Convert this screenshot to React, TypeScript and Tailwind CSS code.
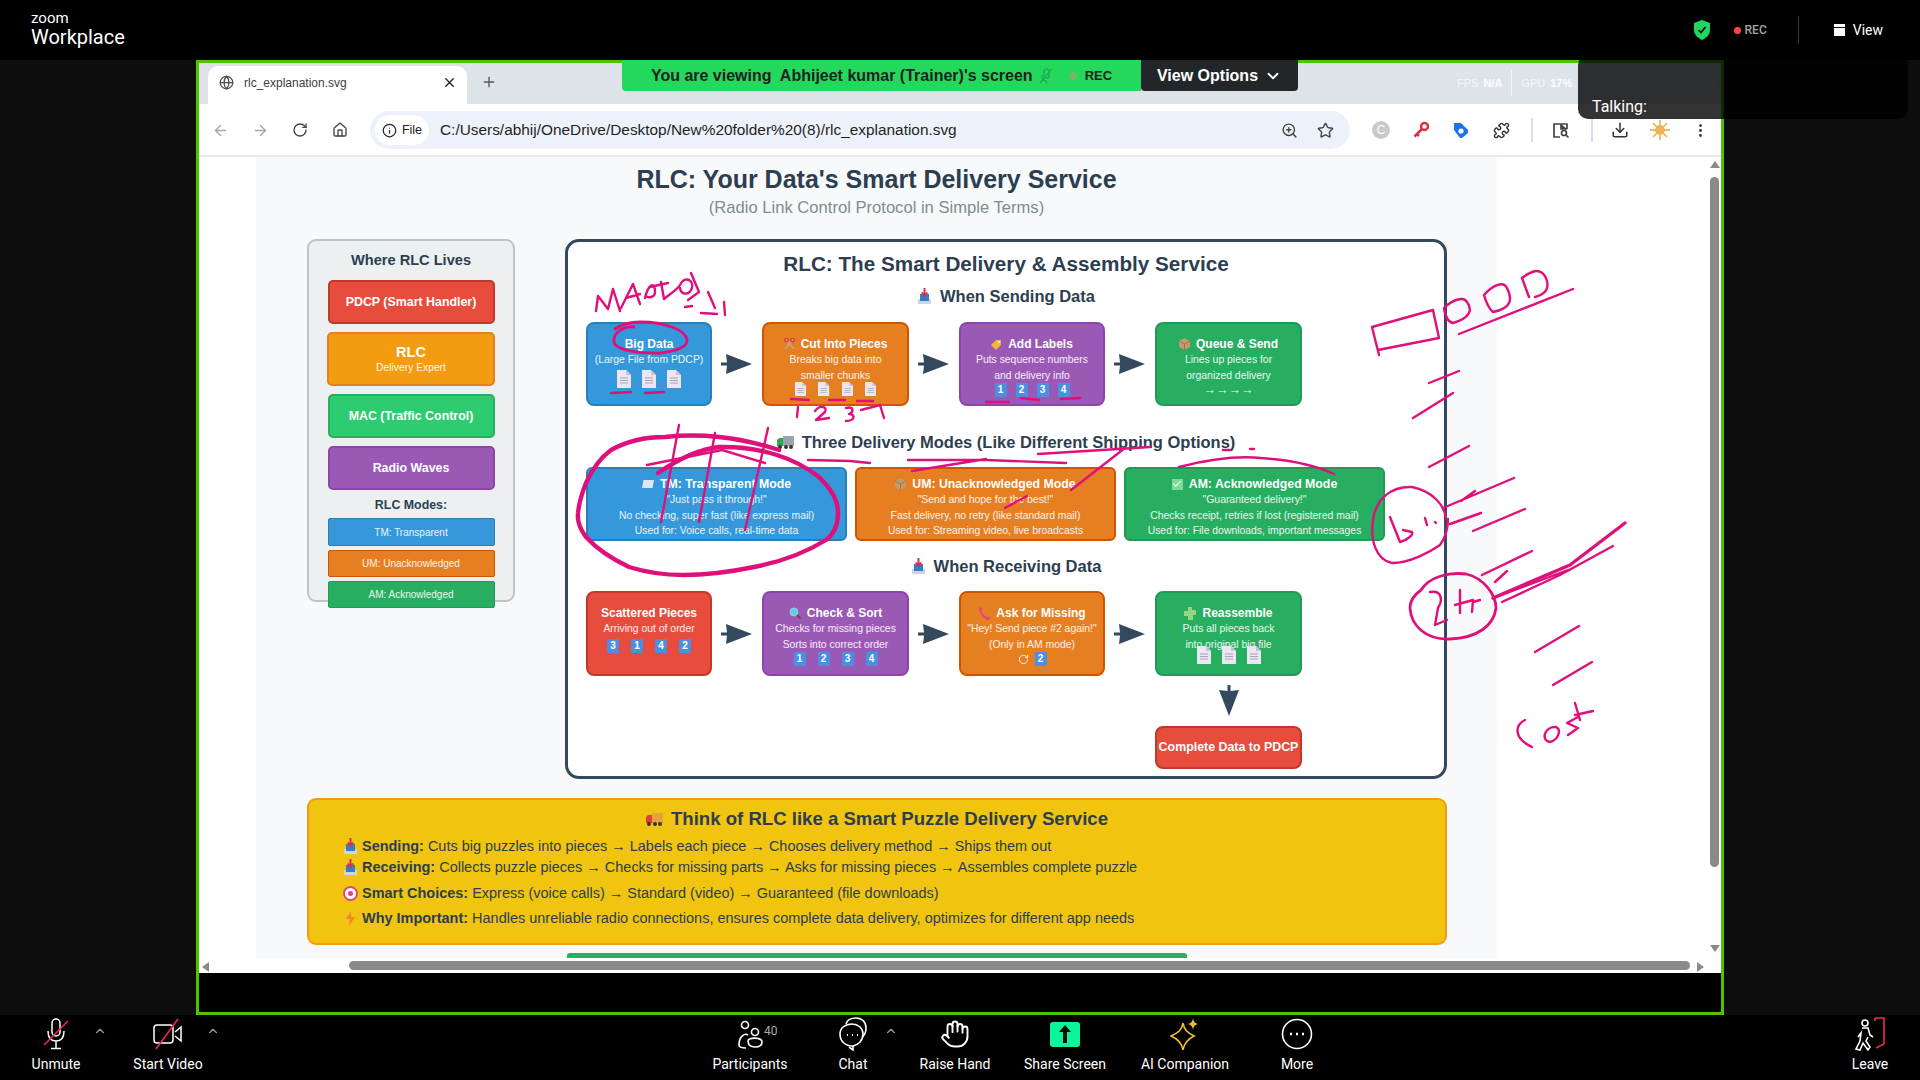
import { ReactNode } from 'react';
import { ArrowLeft, ArrowRight, RotateCw, Home, Info, ZoomIn, Star, Puzzle, Download, EllipsisVertical, Hand, ChevronUp, ChevronDown, X, Plus, Copy, Globe, Check } from 'lucide-react';

const sans = "font-['Liberation_Sans',sans-serif]";

function Doc({ s = 1 }: { s?: number }) {
  return (
    <svg width={14 * s} height={18 * s} viewBox="0 0 14 18">
      <path d="M0 0H9L14 5V18H0Z" fill="#ece6f2" />
      <path d="M9 0L14 5H9Z" fill="#c9c2d6" />
      <path d="M3 8H11M3 10.5H11M3 13H11" stroke="#a9a4b8" strokeWidth="1" />
    </svg>
  );
}

function Tile({ n }: { n: number }) {
  return (
    <span className="inline-flex h-[14px] w-[12px] items-center justify-center rounded-[1px] bg-[#4a90e2] text-[10px] font-bold leading-none text-white">
      {n}
    </span>
  );
}

function FlowArrow({ down }: { down?: boolean }) {
  return (
    <svg width="32" height="20" viewBox="0 0 32 20" className={down ? 'rotate-90' : ''}>
      <path d="M0 8.5H6L5 0L31 10L5 20L6 11.5H0Z" fill="#34495e" />
    </svg>
  );
}

function Tray() {
  return (
    <svg width="15" height="17" viewBox="0 0 15 17" className="shrink-0">
      <path d="M1 11H14V16H1Z" fill="#cfd3e6" />
      <path d="M3 6H12V13H3Z" fill="#2e7fd0" />
      <path d="M7.5 0V7M4.8 4.5L7.5 8L10.2 4.5" stroke="#d8304f" strokeWidth="2" fill="none" />
    </svg>
  );
}

function Truck({ c = '#9aa3ad', cab = '#2fa84f' }: { c?: string; cab?: string }) {
  return (
    <svg width="17" height="15" viewBox="0 0 17 15" className="shrink-0">
      <path d="M6 1H17V11H6Z" fill={c} />
      <path d="M0 5L2 3H6V11H0Z" fill={cab} />
      <circle cx="3" cy="12" r="2" fill="#333" />
      <circle cx="9" cy="12" r="2" fill="#333" />
      <circle cx="14" cy="12" r="2" fill="#333" />
    </svg>
  );
}

function Scissors() {
  return (
    <svg width="11" height="12" viewBox="0 0 11 12" className="shrink-0">
      <path d="M1 11L9 1M10 11L2 1" stroke="#b9b4b0" strokeWidth="1.2" />
      <circle cx="2.5" cy="2" r="1.8" fill="none" stroke="#d63a3a" strokeWidth="1.2" />
      <circle cx="8.5" cy="2" r="1.8" fill="none" stroke="#d63a3a" strokeWidth="1.2" />
    </svg>
  );
}

function TagIcon() {
  return (
    <svg width="11" height="11" viewBox="0 0 11 11" className="shrink-0">
      <path d="M5 1H10V6L5 11L0 6Z" fill="#f5b43c" />
      <circle cx="8" cy="3" r="1" fill="#fff" />
    </svg>
  );
}

function BoxIcon() {
  return (
    <svg width="11" height="12" viewBox="0 0 11 12" className="shrink-0">
      <path d="M5.5 0L11 3V9L5.5 12L0 9V3Z" fill="#c49a6c" />
      <path d="M0 3L5.5 6L11 3M5.5 6V12" stroke="#8e6a42" strokeWidth=".7" fill="none" />
    </svg>
  );
}

function Envelope() {
  return (
    <svg width="12" height="8" viewBox="0 0 12 8" className="shrink-0">
      <path d="M1.5 0H12L10.5 8H0Z" fill="#dfe6f5" />
    </svg>
  );
}

function CheckBox() {
  return (
    <span className="inline-flex h-[11px] w-[11px] shrink-0 items-center justify-center bg-[#7ed99b]">
      <Check size={10} strokeWidth={2.5} className="text-white" />
    </span>
  );
}

function Lens() {
  return (
    <svg width="12" height="12" viewBox="0 0 12 12" className="shrink-0">
      <circle cx="5" cy="5" r="4" fill="#5ad0f0" stroke="#9fc6d8" />
      <path d="M8 8L11.5 11.5" stroke="#6b4a32" strokeWidth="1.8" />
    </svg>
  );
}

function PhoneIcon() {
  return (
    <svg width="12" height="13" viewBox="0 0 12 13" className="shrink-0">
      <path d="M1 0L4 1L3.5 4.5C4.5 7 6.5 9 9 10L12 9.5L11 13C6 13 1 6 1 0Z" fill="#e0457e" />
    </svg>
  );
}

function PuzzleIcon() {
  return (
    <svg width="12" height="13" viewBox="0 0 12 13" className="shrink-0">
      <path d="M4 0H8V3H12V8H9V13H4V9H0V4H4Z" fill="#93d67e" />
    </svg>
  );
}

function Target() {
  return (
    <svg width="15" height="15" viewBox="0 0 15 15" className="shrink-0">
      <circle cx="7.5" cy="7.5" r="6.5" fill="#fff" stroke="#e0457e" strokeWidth="2" />
      <circle cx="7.5" cy="7.5" r="2.5" fill="#e0457e" />
    </svg>
  );
}

function Bolt() {
  return (
    <svg width="9" height="15" viewBox="0 0 9 15" className="mx-[3px] shrink-0">
      <path d="M5 0L0 8H4L3 15L9 6H5Z" fill="#f2872e" />
    </svg>
  );
}

function Card({ className, children }: { className: string; children: ReactNode }) {
  return (
    <div className={`flex h-full flex-col items-center rounded-[8px] border-2 pt-[12px] text-center text-[10.4px] leading-[15.5px] text-white/90 ${className}`}>
      {children}
    </div>
  );
}

function CardTitle({ icon, children }: { icon?: ReactNode; children: ReactNode }) {
  return (
    <div className="flex h-[16px] items-center justify-center gap-[6px] text-[12px] font-bold leading-[16px] text-white">
      {icon}
      <span>{children}</span>
    </div>
  );
}

function ModeCard({ className, icon, title, lines }: { className: string; icon: ReactNode; title: string; lines: string[] }) {
  return (
    <div className={`flex h-[74px] w-[261px] flex-col items-center rounded-[6px] border-2 pt-[7px] text-center text-[10.4px] leading-[15.5px] text-white/90 ${className}`}>
      <div className="flex h-[16px] items-center gap-[6px] text-[12.3px] font-bold leading-[16px] text-white">
        {icon}
        <span>{title}</span>
      </div>
      {lines.map((l) => (
        <div key={l} className="whitespace-nowrap">{l}</div>
      ))}
    </div>
  );
}

function Heading({ icon, children }: { icon: ReactNode; children: ReactNode }) {
  return (
    <div className="flex h-[20px] items-center justify-center gap-[8px] text-[16.5px] font-bold leading-[20px] text-[#2c3e50]">
      {icon}
      <span>{children}</span>
    </div>
  );
}

function MainPanel() {
  return (
    <div className="ml-[50px] h-[540px] w-[882px] rounded-[14px] border-[3px] border-[#34495e] bg-white pl-[18px] pt-[9px]">
      <div className="-ml-[18px] text-center text-[20.7px] font-bold leading-[26px] text-[#2c3e50]">RLC: The Smart Delivery &amp; Assembly Service</div>
      <div className="-ml-[18px] mt-[9px]"><Heading icon={<Tray />}>When Sending Data</Heading></div>

      <div className="mt-[16px] grid h-[84px] grid-cols-[126px_50px_147px_50px_146px_50px_147px]">
        <Card className="border-[#2980b9] bg-[#3498db]">
          <CardTitle>Big Data</CardTitle>
          <div>(Large File from PDCP)</div>
          <div className="flex gap-[11px] pt-[2px]"><Doc /><Doc /><Doc /></div>
        </Card>
        <div className="flex items-center justify-center"><FlowArrow /></div>
        <Card className="border-[#d35400] bg-[#e67e22]">
          <CardTitle icon={<Scissors />}>Cut Into Pieces</CardTitle>
          <div>Breaks big data into</div>
          <div>smaller chunks</div>
          <div className="-mt-[1px] flex gap-[12px]"><Doc s={0.8} /><Doc s={0.8} /><Doc s={0.8} /><Doc s={0.8} /></div>
        </Card>
        <div className="flex items-center justify-center"><FlowArrow /></div>
        <Card className="border-[#8e44ad] bg-[#9b59b6]">
          <CardTitle icon={<TagIcon />}>Add Labels</CardTitle>
          <div>Puts sequence numbers</div>
          <div>and delivery info</div>
          <div className="flex gap-[9px]"><Tile n={1} /><Tile n={2} /><Tile n={3} /><Tile n={4} /></div>
        </Card>
        <div className="flex items-center justify-center"><FlowArrow /></div>
        <Card className="border-[#229954] bg-[#27ae60]">
          <CardTitle icon={<BoxIcon />}>Queue &amp; Send</CardTitle>
          <div>Lines up pieces for</div>
          <div>organized delivery</div>
          <div className="text-[12.5px] leading-[15px]">→→→→</div>
        </Card>
      </div>

      <div className="-ml-[18px] mt-[26px]"><Heading icon={<Truck />}>Three Delivery Modes (Like Different Shipping Options)</Heading></div>

      <div className="mt-[15px] flex gap-[8px]">
        <ModeCard className="border-[#2980b9] bg-[#3498db]" icon={<Envelope />} title="TM: Transparent Mode" lines={['"Just pass it through!"', 'No checking, super fast (like express mail)', 'Used for: Voice calls, real-time data']} />
        <ModeCard className="border-[#d35400] bg-[#e67e22]" icon={<BoxIcon />} title="UM: Unacknowledged Mode" lines={['"Send and hope for the best!"', 'Fast delivery, no retry (like standard mail)', 'Used for: Streaming video, live broadcasts']} />
        <ModeCard className="border-[#229954] bg-[#27ae60]" icon={<CheckBox />} title="AM: Acknowledged Mode" lines={['"Guaranteed delivery!"', 'Checks receipt, retries if lost (registered mail)', 'Used for: File downloads, important messages']} />
      </div>

      <div className="-ml-[18px] mt-[15px]"><Heading icon={<Tray />}>When Receiving Data</Heading></div>

      <div className="mt-[15px] grid h-[85px] grid-cols-[126px_50px_147px_50px_146px_50px_147px]">
        <Card className="border-[#c0392b] bg-[#e74c3c]">
          <CardTitle>Scattered Pieces</CardTitle>
          <div>Arriving out of order</div>
          <div className="flex gap-[12px] pt-[2px]"><Tile n={3} /><Tile n={1} /><Tile n={4} /><Tile n={2} /></div>
        </Card>
        <div className="flex items-center justify-center"><FlowArrow /></div>
        <Card className="border-[#8e44ad] bg-[#9b59b6]">
          <CardTitle icon={<Lens />}>Check &amp; Sort</CardTitle>
          <div>Checks for missing pieces</div>
          <div>Sorts into correct order</div>
          <div className="flex gap-[12px]"><Tile n={1} /><Tile n={2} /><Tile n={3} /><Tile n={4} /></div>
        </Card>
        <div className="flex items-center justify-center"><FlowArrow /></div>
        <Card className="border-[#d35400] bg-[#e67e22]">
          <CardTitle icon={<PhoneIcon />}>Ask for Missing</CardTitle>
          <div className="whitespace-nowrap">"Hey! Send piece #2 again!"</div>
          <div>(Only in AM mode)</div>
          <div className="flex items-center gap-[6px]"><RotateCw size={11} /><Tile n={2} /></div>
        </Card>
        <div className="flex items-center justify-center"><FlowArrow /></div>
        <Card className="border-[#229954] bg-[#27ae60]">
          <CardTitle icon={<PuzzleIcon />}>Reassemble</CardTitle>
          <div>Puts all pieces back</div>
          <div>into original big file</div>
          <div className="-mt-[6px] flex gap-[11px]"><Doc /><Doc /><Doc /></div>
        </Card>
      </div>

      <div className="ml-[569px] w-[147px]">
        <div className="flex h-[50px] items-center justify-center"><FlowArrow down /></div>
        <div className="flex h-[43px] items-center justify-center whitespace-nowrap rounded-[8px] border-2 border-[#c0392b] bg-[#e74c3c] text-[12.4px] font-bold text-white">
          Complete Data to PDCP
        </div>
      </div>
    </div>
  );
}

function LeftPanel() {
  return (
    <div className="flex h-[363px] w-[208px] flex-col items-center rounded-[9px] border-2 border-[#bdc3c7] bg-[#ecf0f1] pt-[9px]">
      <div className="shrink-0 text-[14.6px] font-bold leading-[20px] text-[#2c3e50]">Where RLC Lives</div>
      <div className="mt-[10px] flex h-[44px] w-[167px] shrink-0 items-center justify-center rounded-[5px] border-2 border-[#c0392b] bg-[#e74c3c] text-[12.4px] font-bold text-white">PDCP (Smart Handler)</div>
      <div className="mt-[8px] flex h-[54px] w-[168px] shrink-0 flex-col items-center justify-center rounded-[5px] border-2 border-[#e67e22] bg-[#f39c12] text-white">
        <div className="text-[14.5px] font-bold leading-[18px]">RLC</div>
        <div className="text-[10.3px] leading-[14px] text-white/90">Delivery Expert</div>
      </div>
      <div className="mt-[8px] flex h-[44px] w-[167px] shrink-0 items-center justify-center rounded-[5px] border-2 border-[#27ae60] bg-[#2ecc71] text-[12.4px] font-bold text-white">MAC (Traffic Control)</div>
      <div className="mt-[8px] flex h-[44px] w-[167px] shrink-0 items-center justify-center rounded-[5px] border-2 border-[#8e44ad] bg-[#9b59b6] text-[12.4px] font-bold text-white">Radio Waves</div>
      <div className="mt-[6px] shrink-0 text-[12.4px] font-bold leading-[18px] text-[#2c3e50]">RLC Modes:</div>
      <div className="mt-[4px] flex h-[28px] w-[167px] shrink-0 items-center justify-center rounded-[2px] border border-[#2980b9] bg-[#3498db] text-[10px] text-white/90">TM: Transparent</div>
      <div className="mt-[4px] flex h-[27px] w-[167px] shrink-0 items-center justify-center rounded-[2px] border border-[#d35400] bg-[#e67e22] text-[10px] text-white/90">UM: Unacknowledged</div>
      <div className="mt-[4px] flex h-[27px] w-[167px] shrink-0 items-center justify-center rounded-[2px] border border-[#229954] bg-[#27ae60] text-[10px] text-white/90">AM: Acknowledged</div>
    </div>
  );
}

function YellowPanel() {
  const row = 'flex h-[20px] items-center text-[14.47px] leading-[20px] text-[#2c3e50]';
  return (
    <div className="ml-[51px] mt-[19px] h-[147px] w-[1140px] rounded-[9px] border-2 border-[#f39c12] bg-[#f1c40f] pl-[34px] pt-[7px]">
      <div className="-ml-[34px] flex h-[24px] items-center justify-center gap-[8px] text-[18.6px] font-bold text-[#2c3e50]">
        <Truck c="#e6a23c" cab="#e23d3d" />
        <span>Think of RLC like a Smart Puzzle Delivery Service</span>
      </div>
      <div className={`${row} mt-[5px]`}><span className="w-[19px]"><Tray /></span><span><b>Sending:</b> Cuts big puzzles into pieces → Labels each piece → Chooses delivery method → Ships them out</span></div>
      <div className={`${row} mt-[1px]`}><span className="w-[19px]"><Tray /></span><span><b>Receiving:</b> Collects puzzle pieces → Checks for missing parts → Asks for missing pieces → Assembles complete puzzle</span></div>
      <div className={`${row} mt-[6px]`}><span className="w-[19px]"><Target /></span><span><b>Smart Choices:</b> Express (voice calls) → Standard (video) → Guaranteed (file downloads)</span></div>
      <div className={`${row} mt-[5px]`}><span className="w-[19px]"><Bolt /></span><span><b>Why Important:</b> Handles unreliable radio connections, ensures complete data delivery, optimizes for different app needs</span></div>
    </div>
  );
}

function BrowserChrome() {
  return (
    <>
      {/* tab strip */}
      <div className="flex h-[41px] items-end bg-[#dee3ea] pl-[9px]">
        <div className="flex h-[38px] w-[259px] items-center rounded-t-[10px] bg-white pb-[5px] pl-[11px] pr-[10px]">
          <Globe size={15} className="text-[#4a4d52]" />
          <span className="ml-[10px] text-[12px] text-[#3c4043]">rlc_explanation.svg</span>
          <X size={15} strokeWidth={2.2} className="ml-auto text-[#222]" />
        </div>
        <div className="mb-[14px] ml-[14px] text-[#555]"><Plus size={16} /></div>
        <div className="mb-[8px] ml-auto mr-[2px] flex w-[262px] items-center text-[11px] text-white/70">
          <span>FPS</span><b className="ml-[5px] text-white/90">N/A</b>
          <span className="mx-[9px] h-[26px] w-px bg-white/60" />
          <span>GPU</span><b className="ml-[5px] text-white/90">17%</b>
          <span className="ml-[23px] text-white/35">CPU 12%</span>
          <Copy size={14} className="ml-[6px] text-white/40" />
          <span className="ml-[8px] text-white/35">LAT</span><b className="ml-[8px] text-white/50">N/A</b>
        </div>
      </div>
      {/* toolbar */}
      <div className="flex h-[51px] items-center bg-white pl-px pt-[1px] text-[#5f6368]">
        <div className="flex w-[40px] justify-center text-[#a4a7ab]"><ArrowLeft size={17} /></div>
        <div className="flex w-[40px] justify-center text-[#a4a7ab]"><ArrowRight size={17} /></div>
        <div className="flex w-[40px] justify-center text-[#444]"><RotateCw size={16} /></div>
        <div className="flex w-[40px] justify-center text-[#444]"><Home size={16} /></div>
        <div className="ml-[10px] flex h-[38px] w-[980px] items-center rounded-full bg-[#edf2fa] pl-[5px] pr-[16px]">
          <div className="flex h-[30px] w-[54px] shrink-0 items-center justify-center gap-[5px] rounded-full bg-white text-[#222]">
            <Info size={15} />
            <span className="text-[12.5px] font-medium">File</span>
          </div>
          <span className="ml-[11px] text-[15.4px] text-[#1f1f1f]">C:/Users/abhij/OneDrive/Desktop/New%20folder%20(8)/rlc_explanation.svg</span>
          <ZoomIn size={17} className="ml-auto text-[#444]" />
          <Star size={17} className="ml-[19px] text-[#444]" />
        </div>
        <div className="ml-[11px] flex w-[40px] justify-center">
          <span className="flex h-[18px] w-[18px] items-center justify-center rounded-full bg-[#c9c9c9] text-[12px] text-white">C</span>
        </div>
        <div className="flex w-[40px] justify-center">
          <svg width="18" height="18" viewBox="0 0 18 18"><circle cx="12.5" cy="5.5" r="3.5" fill="none" stroke="#d9303e" strokeWidth="2.5" /><path d="M10 8L2.5 15.5M5 13L7 15" stroke="#d9303e" strokeWidth="2.5" /></svg>
        </div>
        <div className="flex w-[40px] justify-center">
          <svg width="18" height="18" viewBox="0 0 18 18"><path d="M2 2H9L16 9V12L10 17H8L2 9Z" fill="#1a73e8" /><circle cx="9" cy="10" r="2.6" fill="#fff" /></svg>
        </div>
        <div className="flex w-[40px] justify-center text-[#333]"><Puzzle size={17} /></div>
        <span className="ml-[10px] h-[24px] w-[2px] bg-[#d5dfee]" />
        <div className="ml-[8px] flex w-[40px] justify-center text-[#444]">
          <svg width="18" height="18" viewBox="0 0 18 18" fill="none" stroke="currentColor" strokeWidth="1.7"><path d="M8 16H2V3H15V8" /><path d="M9 3V8H15" fill="#444" /><circle cx="12" cy="12" r="2.5" /><path d="M14 14L16.5 16.5" /></svg>
        </div>
        <span className="ml-[10px] h-[24px] w-[2px] bg-[#d5dfee]" />
        <div className="ml-[7px] flex w-[40px] justify-center text-[#333]"><Download size={18} /></div>
        <div className="flex w-[40px] justify-center">
          <svg width="20" height="20" viewBox="0 0 20 20"><path d="M10 0V20M0 10H20M3 3L17 17M17 3L3 17" stroke="#e6a63f" strokeWidth="1.4" /><circle cx="10" cy="10" r="5" fill="#eeb557" /></svg>
        </div>
        <div className="flex w-[40px] justify-center text-[#333]"><EllipsisVertical size={17} /></div>
      </div>
      <div className="h-[2px] bg-[#e8e9ec]" />
    </>
  );
}

function Page() {
  return (
    <div className={`flex h-[816px] flex-col bg-white ${sans}`}>
      <div className="flex min-h-0 flex-1">
        <div className="ml-[57px] h-[801px] w-[1241px] overflow-hidden bg-[#f7f9fb] pt-[7px]">
          <div className="text-center text-[25px] font-bold leading-[30px] text-[#2c3e50]">RLC: Your Data's Smart Delivery Service</div>
          <div className="mt-[4px] text-center text-[16.6px] leading-[20px] text-[#7f8c8d]">(Radio Link Control Protocol in Simple Terms)</div>
          <div className="ml-[51px] mt-[21px] flex">
            <LeftPanel />
            <MainPanel />
          </div>
          <YellowPanel />
          <div className="ml-[311px] mt-[8px] h-[6px] w-[620px] rounded-t-[3px] bg-[#27ae60]" />
        </div>
        <div className="ml-auto flex w-[13px] flex-col items-center bg-white">
          <span className="mt-[4px] h-0 w-0 border-x-[5px] border-b-[7px] border-x-transparent border-b-[#8a8a8a]" />
          <span className="mt-[9px] h-[690px] w-[9px] rounded-full bg-[#8a8a8a]" />
          <span className="mb-[8px] mt-auto h-0 w-0 border-x-[5px] border-t-[7px] border-x-transparent border-t-[#8a8a8a]" />
        </div>
      </div>
      <div className="flex h-[13px] items-start bg-white pl-[3px]">
        <span className="mt-[2px] h-0 w-0 border-y-[5px] border-r-[7px] border-y-transparent border-r-[#8a8a8a]" />
        <span className="ml-[140px] mt-[1px] h-[9px] w-[1341px] rounded-full bg-[#8a8a8a]" />
        <span className="ml-[7px] mt-[2px] h-0 w-0 border-y-[5px] border-l-[7px] border-y-transparent border-l-[#8a8a8a]" />
      </div>
    </div>
  );
}

function ToolItem({ w, icon, label, caret, ml }: { w: string; icon: ReactNode; label: string; caret?: string; ml?: string }) {
  return (
    <div className={`relative flex flex-col items-center pt-[1px] ${w} ${ml ?? ''}`}>
      <div className="flex h-[36px] items-center justify-center">{icon}</div>
      <div className="mt-[3px] text-[14px] leading-[18px] text-white">{label}</div>
      {caret && <ChevronUp size={14} className={`absolute top-[9px] text-[#999] ${caret}`} />}
    </div>
  );
}

function BottomBar() {
  return (
    <div className="flex h-[65px] bg-black font-['Roboto',sans-serif]">
      <ToolItem w="w-[112px]" caret="left-[93px]" label="Unmute" icon={
        <svg width="26" height="32" viewBox="0 0 26 32" fill="none" stroke="#fff" strokeWidth="1.5"><rect x="9" y="1" width="8" height="17" rx="4" /><path d="M5 13C5 20 8 23 13 23C18 23 21 20 21 13M13 23V30M8 30.5H18" /><path d="M1 27L25 3" stroke="#f0245c" strokeWidth="1.6" /></svg>
      } />
      <ToolItem w="w-[112px]" caret="left-[94px]" label="Start Video" icon={
        <svg width="30" height="32" viewBox="0 0 30 32" fill="none" stroke="#fff" strokeWidth="1.5"><rect x="1" y="7" width="19" height="18" rx="3" /><path d="M22 14L28 9V23L22 18" /><path d="M3 31L25 1" stroke="#f0245c" strokeWidth="1.6" /></svg>
      } />
      <ToolItem w="w-[100px]" ml="ml-[476px]" label="Participants" icon={
        <span className="relative">
          <svg width="26" height="32" viewBox="0 0 26 32" fill="none" stroke="#fff" strokeWidth="1.6"><circle cx="8" cy="7" r="3.5" /><circle cx="18" cy="14" r="3.5" /><path d="M2 27C2 18 8 15 11 17M11 23C11 19 25 19 25 24C25 28 22 29 18 29C14 29 11 28 11 23Z" /><path d="M2 27C2 29 5 30 9 30" /></svg>
          <span className="absolute left-[27px] top-[4px] text-[12px] text-[#aaa]">40</span>
        </span>
      } />
      <ToolItem w="w-[106px]" caret="left-[84px]" label="Chat" icon={
        <svg width="28" height="34" viewBox="0 0 28 34" fill="none" stroke="#fff" strokeWidth="1.6"><path d="M7 7C8 3 12 1 17 1C23 1 27 5 27 11C27 15 26 18 23 20" /><path d="M14 29C7 29 1 25 1 17C1 11 6 7 13 7C19 7 24 11 24 17C24 24 19 28 14 29V33L10 30" /><path d="M8 18H9M13 18H14M18 18H19" strokeWidth="2" /></svg>
      } />
      <ToolItem w="w-[98px]" label="Raise Hand" icon={<Hand size={30} strokeWidth={1.5} className="text-white" />} />
      <ToolItem w="w-[122px]" label="Share Screen" icon={
        <span className="flex h-[25px] w-[30px] items-center justify-center rounded-[3px] bg-[#0bf59a]">
          <svg width="14" height="18" viewBox="0 0 14 18" fill="#0a0a0a"><path d="M7 0L13 7H9V18H5V7H1Z" /></svg>
        </span>
      } />
      <ToolItem w="w-[118px]" label="AI Companion" icon={
        <svg width="30" height="32" viewBox="0 0 30 32" fill="none"><path d="M13 5C14 12 18 15 24 18C18 21 14 25 13 32C12 25 8 21 1 18C8 15 12 12 13 5Z" stroke="#f2c037" strokeWidth="1.6" /><path d="M23 0C23.5 4 25 5.500 29 6C25 6.500 23.500 8 23 12C22.500 8 21 6.500 17 6C21 5.500 22.500 4 23 0Z" fill="#f2c037" /></svg>
      } />
      <ToolItem w="w-[106px]" label="More" icon={
        <svg width="32" height="32" viewBox="0 0 32 32" fill="none" stroke="#fff" strokeWidth="1.6"><circle cx="16" cy="16" r="14.500" /><path d="M9 16H11M15 16H17M21 16H23" strokeWidth="2.4" /></svg>
      } />
      <ToolItem w="w-[100px]" ml="ml-auto" label="Leave" icon={
        <svg width="32" height="34" viewBox="0 0 32 34" fill="none" stroke="#fff" strokeWidth="1.6"><path d="M21 1H30V27L22 31" stroke="#f0245c" /><path d="M21 1V4" stroke="#f0245c" /><circle cx="11" cy="6" r="3" /><path d="M8 11H14L16 18L19 20M14 20L12 24L16 30L14 33L9 26L6 33L2 32L6 24L7 16L4 20" /></svg>
      } />
    </div>
  );
}

// handwritten annotation, traced in page coordinates
function InkLayer() {
  return (
    <svg width="1920" height="1080" viewBox="0 0 1920 1080" fill="none" stroke="#e0107a" strokeWidth="2.4" strokeLinecap="round" strokeLinejoin="round" className="pointer-events-none absolute left-0 top-0">
      {/* MApto */}
      <path d="M596 311L598 296L608 309L613 289L620 311M621 308L633 284L640 304M626 298L640 294M645 298C648 285 655 280 655 292C655 298 648 298 646 296M650 287L668 283M661 282L664 299C670 294 678 289 680 285C684 276 694 279 692 288C689 296 681 295 680 288" />
      <path d="M691 273L699 292L688 300M708 292L715 308M701 313L717 314M724 302L725 315M685 307L692 306" />
      <path d="M634 327C620 326 613 335 614 342C615 350 640 354 660 353C678 351 688 346 687 340C686 330 665 322 640 322C630 322 622 324 615 329" strokeWidth="2.8" />
      <path d="M611 393L631 392M645 393L664 392M791 399L809 400M829 400L845 400M857 401L873 401M986 402L1009 402M1021 398L1039 400M1061 399L1080 398" />
      <path d="M798 407L797 417M815 411C820 404 828 407 825 412L816 420L829 418M846 408C854 406 854 412 849 414C856 414 855 421 846 421M861 410L880 405L884 418" />
      {/* TM ring */}
      <path d="M658 473C680 458 700 449 719 447C760 446 795 458 819 477C832 490 838 500 838 513C838 525 834 534 826 540C805 553 780 562 754 567C730 572 705 575 683 575C663 575 645 572 629 567C610 558 596 548 586 537C580 529 577 521 578 513C579 503 582 493 586 483C592 470 600 458 611 450C627 441 646 437 665 437C683 435 700 435 719 437C740 439 760 444 779 450" strokeWidth="4.4" />
      <path d="M679 425L661 522M715 433L699 522M768 428L745 530M647 465L722 450L765 463" />
      <path d="M808 460L850 461L870 463M908 460L986 460L1066 463M912 471L986 459M1038 454L1150 447M1071 490L1125 448M1005 508L1027 496M1179 467C1210 459 1240 456 1261 458C1290 460 1315 465 1334 474M1250 449L1254 449M1223 450L1230 450" />
      {/* right hand notes */}
      <path d="M1372 327L1433 310L1439 338L1378 350M1372 327L1379 355M1444 308C1452 300 1463 296 1467 302C1473 310 1470 318 1453 323C1448 322 1445 315 1444 308ZM1484 295C1492 286 1503 280 1507 288C1512 298 1513 308 1493 312C1488 308 1486 302 1484 295ZM1522 278C1530 272 1540 266 1546 278C1550 288 1546 294 1535 297M1522 278L1529 297M1459 334L1573 289" />
      <path d="M1429 383L1459 371M1413 418L1453 393M1429 467L1469 446M1443 508L1514 478M1461 501L1475 491M1450 524L1481 513M1473 531L1525 509M1482 575L1532 551M1495 582L1507 571M1535 652L1579 626M1553 685L1592 662" />
      <path d="M1446 519C1445 505 1432 491 1412 487C1392 486 1376 498 1373 520C1370 540 1376 560 1392 563C1410 563 1430 552 1440 545C1445 538 1448 530 1448 519" />
      <path d="M1390 517L1400 542C1408 540 1414 534 1412 532L1403 530M1425 518L1427 525M1435 522L1436 523" />
      <path d="M1421 590C1430 576 1450 572 1466 574C1484 578 1496 595 1496 608C1494 625 1478 638 1450 639C1425 640 1411 625 1410 608C1410 600 1414 595 1421 590" strokeWidth="2.8" />
      <path d="M1430 592C1442 590 1443 600 1438 608L1435 625L1447 620M1460 590L1460 613M1455 605L1473 600L1472 612M1473 602L1480 600" />
      <path d="M1493 598L1570 565L1625 523" strokeWidth="3.4" />
      <path d="M1502 602L1560 575L1613 546M1496 597L1568 570" />
      <path d="M1525 720C1515 725 1513 738 1532 747M1556 727C1545 726 1540 740 1550 742C1558 740 1562 730 1556 727M1578 717L1567 723L1578 728L1568 735M1575 703L1580 720M1575 715L1593 711" />
    </svg>
  );
}

export default function App() {
  return (
    <div className={`relative h-[1080px] w-[1920px] overflow-hidden bg-black ${sans}`}>
      {/* zoom top bar */}
      <div className="flex h-[60px] items-center bg-black pl-[31px] pr-[37px] font-['Roboto',sans-serif] text-white">
        <div>
          <div className="text-[15px] leading-[13px]">zoom</div>
          <div className="text-[20px] leading-[24px]">Workplace</div>
        </div>
        <svg width="16" height="20" viewBox="0 0 16 20" className="ml-auto">
          <path d="M8 0L16 3V10C16 15 12 18 8 20C4 18 0 15 0 10V3Z" fill="#1fd65f" />
          <path d="M4.500 10L7 12.500L11.500 7" stroke="#000" strokeWidth="1.6" fill="none" />
        </svg>
        <span className="ml-[24px] h-[7px] w-[7px] rounded-full bg-[#f44]" />
        <span className="ml-[4px] text-[12px] font-medium text-[#a5a5a5]">REC</span>
        <span className="ml-[31px] h-[28px] w-px bg-[#333]" />
        <span className="ml-[35px] flex h-[12px] w-[11px] flex-col gap-px">
          <span className="h-[3px] bg-white" />
          <span className="h-[8px] bg-white" />
        </span>
        <span className="ml-[8px] text-[14px]">View</span>
      </div>

      {/* share area */}
      <div className="flex h-[955px]">
        <div className="w-[196px] bg-[#0d0d0d]" />
        <div className="relative h-[955px] w-[1528px] border-[3px] border-[#4fc400] bg-black">
          <BrowserChrome />
          <Page />
          <div className="absolute left-[423px] top-[-3px] flex h-[31px]">
            <div className="flex w-[519px] items-center justify-center gap-[6px] rounded-bl-[4px] bg-[#23d95c] text-[16px] font-bold text-[#222]">
              <span className="whitespace-pre">You are viewing  Abhijeet kumar (Trainer)'s screen</span>
              <svg width="14" height="16" viewBox="0 0 14 16" fill="none" stroke="#2a5" strokeWidth="1.4"><rect x="5" y="1" width="5" height="9" rx="2.500" /><path d="M3 7C3 11 5 13 7.500 13M7.500 13V15.500M1 15L13 1" /></svg>
              <span className="ml-[10px] h-[8px] w-[8px] rounded-full bg-[#7cb36c]" />
              <span className="ml-[2px] text-[13px]">REC</span>
            </div>
            <div className="flex w-[157px] items-center justify-center gap-[6px] rounded-b-[4px] bg-[#232629] text-[16px] font-bold text-white">
              View Options
              <ChevronDown size={18} strokeWidth={2.4} />
            </div>
          </div>
        </div>
        <div className="w-[196px] bg-[#0d0d0d]" />
      </div>

      <BottomBar />

      {/* talking pill */}
      <div className="absolute left-[1578px] top-[55px] flex h-[64px] w-[330px] items-end rounded-[10px] bg-black/80 pl-[14px] font-['Roboto',sans-serif] text-[16px] leading-[24px] text-white">
        Talking:
      </div>

      <InkLayer />
    </div>
  );
}
